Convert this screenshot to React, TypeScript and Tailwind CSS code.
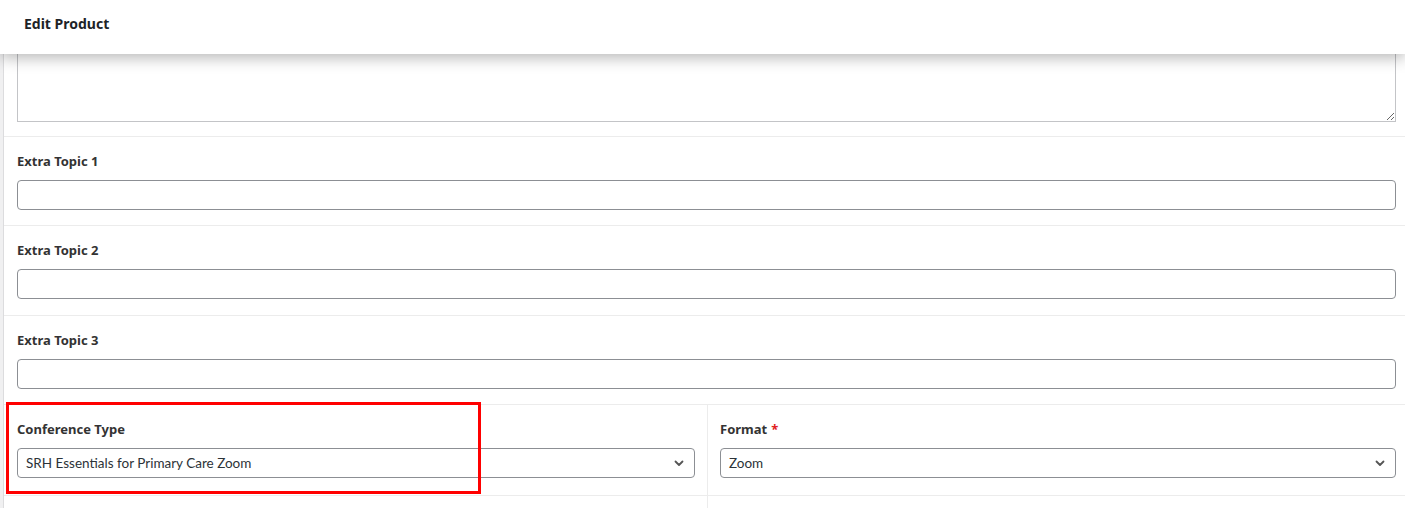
const Chevron = () => (
  <svg width="12" height="12" viewBox="0 0 12 12" className="absolute right-[9px] top-1/2 -translate-y-1/2 text-[#555]">
    <path d="M2.5 4.5 L6 8 L9.5 4.5" fill="none" stroke="currentColor" strokeWidth="1.8" strokeLinecap="round" strokeLinejoin="round" />
  </svg>
);

const Label = ({ text, required }: { text: string; required?: boolean }) => (
  <label className="block h-[20px] leading-[20px] text-[13px] font-bold text-[#333] mb-[9px]">
    {text}
    {required && <span className="text-[#e02020] ml-[4px]">*</span>}
  </label>
);

const TextRow = ({ label, tall }: { label: string; tall?: boolean }) => (
  <div className={`pt-[14px] pl-[13px] pr-[9px] border-b border-[#ececec] ${tall ? "pb-[16px]" : "pb-[15px]"}`}>
    <Label text={label} />
    <input type="text" className="block w-full h-[30px] border border-[#8c8f94] rounded-[4px] bg-white outline-none px-2" />
  </div>
);

const SelectBox = ({ value }: { value: string }) => (
  <div
    className="relative h-[30px] border border-[#8c8f94] rounded-[4px] bg-white flex items-center pl-[8px] text-[13.5px] text-[#2c3338]"
    style={{ fontFamily: 'Lato, "Noto Sans", sans-serif' }}
  >
    {value}
    <Chevron />
  </div>
);

export default function App() {
  return (
    <div className="w-[1405px] h-[508px] overflow-hidden bg-white relative" style={{ fontFamily: '"Noto Sans", "Open Sans", sans-serif' }}>
      <header className="relative z-10 h-[54px] bg-white px-[24px] pt-[14px] shadow-[0_4px_14px_rgba(0,0,0,0.28)]">
        <h1 className="text-[14px] leading-[20px] font-bold text-[#1d2327]">Edit Product</h1>
      </header>

      <div className="flex h-[454px]">
        <div className="w-[4px] shrink-0 bg-[#f0f0f1] border-r border-[#dcdcde]" />
        <div className="flex-1">
          <div className="pl-[13px] pr-[9px] pb-[14px] border-b border-[#ececec]">
            <textarea className="block w-full h-[68px] border border-t-0 border-[#c3c4c7] bg-white outline-none resize-y" />
          </div>
          <TextRow label="Extra Topic 1" />
          <TextRow label="Extra Topic 2" tall />
          <TextRow label="Extra Topic 3" />
          <div className="flex h-[104px]">
            <div className="w-[704px] shrink-0 border-r border-[#ececec]">
              <div className="pt-[14px] pb-[17px] pl-[13px] pr-[12px] border-b border-[#ececec]">
                <Label text="Conference Type" />
                <SelectBox value="SRH Essentials for Primary Care Zoom" />
              </div>
            </div>
            <div className="flex-1">
              <div className="pt-[14px] pb-[17px] pl-[12px] pr-[9px] border-b border-[#ececec]">
                <Label text="Format" required />
                <SelectBox value="Zoom" />
              </div>
            </div>
          </div>
        </div>
      </div>

      <div className="absolute left-[6px] top-[402px] w-[475px] h-[92px] border-[3px] border-[#ff0000] pointer-events-none" />
    </div>
  );
}
